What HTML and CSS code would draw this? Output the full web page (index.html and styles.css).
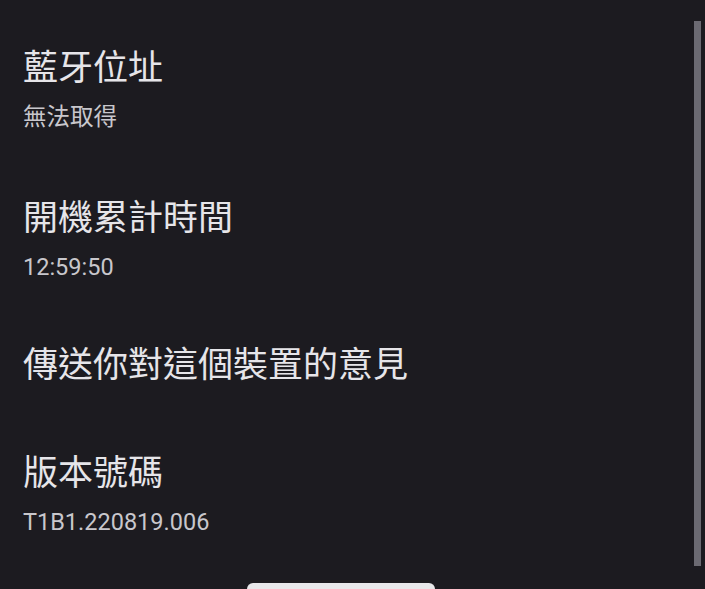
FILE: index.html
```html
<!DOCTYPE html>
<html lang="zh-Hant">
<head>
<meta charset="utf-8">
<link rel="stylesheet" href="styles.css">
</head>
<body>
<div class="screen">
  <ul class="list">
    <li class="item">
      <div class="title">藍牙位址</div>
      <div class="summary">無法取得</div>
    </li>
    <li class="item">
      <div class="title">開機累計時間</div>
      <div class="summary">12:59:50</div>
    </li>
    <li class="item item-single">
      <div class="title">傳送你對這個裝置的意見</div>
    </li>
    <li class="item">
      <div class="title">版本號碼</div>
      <div class="summary">T1B1.220819.006</div>
    </li>
  </ul>
  <div class="scrollbar"></div>
  <div class="home-indicator"></div>
</div>
</body>
</html>
```

FILE: styles.css
```css
html, body {
  margin: 0;
  padding: 0;
  background: #1c1b20;
}
.screen {
  position: relative;
  width: 705px;
  height: 589px;
  overflow: hidden;
  background: #1c1b20;
  font-family: Roboto, "Noto Sans CJK TC", sans-serif;
}
.list {
  list-style: none;
  margin: 0;
  padding: 16px 0 0 0;
}
.item {
  display: flex;
  flex-direction: column;
  padding: 28px 23px 26px;
}
.item-single {
  padding: 25px 23px 31px;
}
.title {
  font-size: 35px;
  line-height: 49px;
  color: #e6e5e9;
  white-space: nowrap;
}
.summary {
  margin-top: 2px;
  font-size: 23.5px;
  line-height: 45px;
  color: #c8c7cc;
  white-space: nowrap;
}
.scrollbar {
  position: absolute;
  left: 694px;
  top: 21px;
  width: 7px;
  height: 545px;
  background: #6b6a72;
}
.home-indicator {
  position: absolute;
  left: 247px;
  top: 583px;
  width: 188px;
  height: 12px;
  border-radius: 6px;
  background: #e8e8ea;
}
```
